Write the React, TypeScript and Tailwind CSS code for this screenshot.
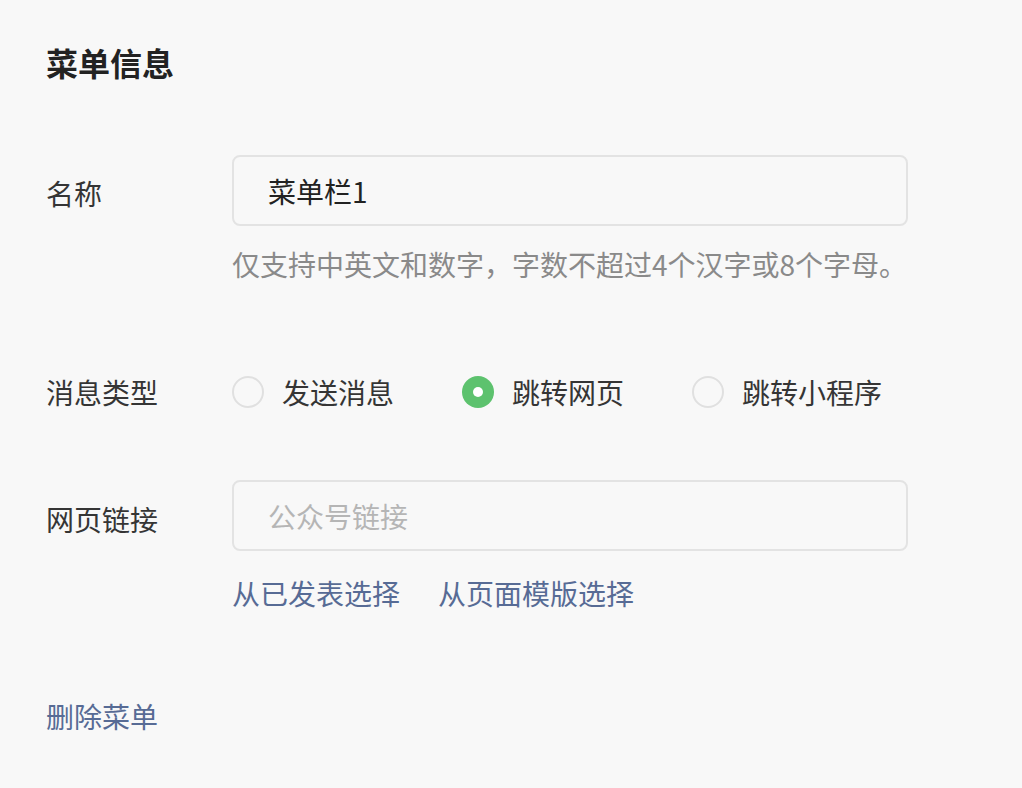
import React from "react";

const font = { fontFamily: '"Noto Sans CJK SC", "Noto Sans", sans-serif' };

function Radio({ checked, label }: { checked?: boolean; label: string }) {
  return (
    <div className="flex items-center gap-[18px]">
      {checked ? (
        <span className="w-[32px] h-[32px] rounded-full bg-[#5dc26e] flex items-center justify-center">
          <span className="w-[10px] h-[10px] rounded-full bg-white" />
        </span>
      ) : (
        <span className="w-[32px] h-[32px] rounded-full border-2 border-[#e0e0e0]" />
      )}
      <span className="text-[28px] leading-[40px] text-[#353535]">{label}</span>
    </div>
  );
}

export default function App() {
  return (
    <div className="w-[1022px] h-[788px] bg-[#f8f8f8] overflow-hidden pl-[46px] pt-[41px]" style={font}>
      <div className="text-[32px] leading-[42px] font-bold text-[#222]">菜单信息</div>

      <div className="flex mt-[72px]">
        <div className="w-[186px] pt-[18px] text-[28px] leading-[40px] text-[#353535]">名称</div>
        <div className="flex flex-col">
          <div className="w-[676px] h-[71px] border-2 border-[#e3e3e3] rounded-[8px] flex items-center pl-[34px] text-[28px] text-[#222]">
            菜单栏1
          </div>
          <div className="mt-[19px] text-[28px] leading-[38px] text-[#8a8a8a]">
            仅支持中英文和数字，字数不超过4个汉字或8个字母。
          </div>
        </div>
      </div>

      <div className="flex items-center mt-[89px]">
        <div className="w-[186px] text-[28px] leading-[40px] text-[#353535]">消息类型</div>
        <div className="flex items-center gap-[68px]">
          <Radio label="发送消息" />
          <Radio checked label="跳转网页" />
          <Radio label="跳转小程序" />
        </div>
      </div>

      <div className="flex mt-[68px]">
        <div className="w-[186px] pt-[19px] text-[28px] leading-[40px] text-[#353535]">网页链接</div>
        <div className="flex flex-col">
          <div className="w-[676px] h-[71px] border-2 border-[#e3e3e3] rounded-[8px] flex items-center pl-[34px] text-[28px] text-[#b5b5b5]">
            公众号链接
          </div>
          <div className="mt-[22px] flex gap-[38px] text-[28px] leading-[40px] text-[#576b95]">
            <span>从已发表选择</span>
            <span>从页面模版选择</span>
          </div>
        </div>
      </div>

      <div className="mt-[83px] text-[28px] leading-[40px] text-[#576b95]">删除菜单</div>
    </div>
  );
}
